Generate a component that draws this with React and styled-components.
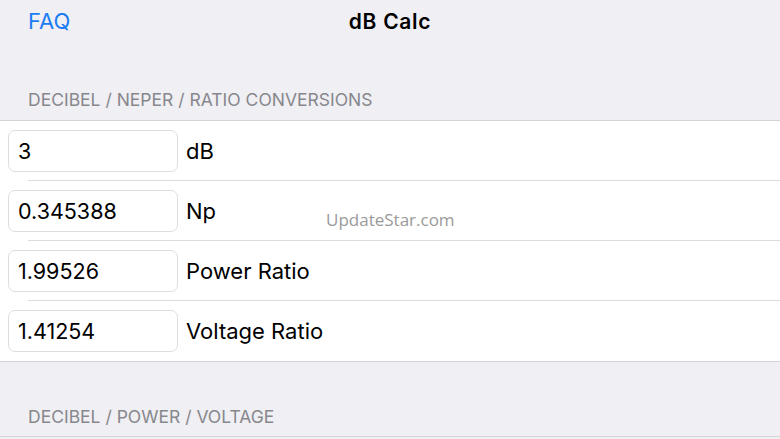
import React from 'react';
import styled, {createGlobalStyle} from 'styled-components';

const GlobalStyle = createGlobalStyle`
    html, body {
        margin: 0;
        padding: 0;
        background: #efeff4;
    }
    body {
        font-family: Inter, "Liberation Sans", sans-serif;
        -webkit-font-smoothing: antialiased;
    }
`

const Screen = styled.div`
    position: relative;
    width: 780px;
    height: 439px;
    overflow: hidden;
    background: #efeff4;
`

const NavBar = styled.div`
    position: relative;
    height: 44px;
    display: flex;
    align-items: center;
    padding: 0 28px;
    box-sizing: border-box;
    margin-top: -1px;
`

const NavButton = styled.span`
    font-size: 22px;
    color: #1b7cf4;
`

const NavTitle = styled.h1`
    position: absolute;
    left: 0;
    right: 0;
    margin: 0;
    text-align: center;
    font-size: 21px;
    font-weight: 600;
    color: #000;
    letter-spacing: 0.7px;
    pointer-events: none;
`

const SectionHeader = styled.div`
    padding: ${props => props.top}px 28px ${props => props.bottom}px;
    font-size: 17.5px;
    color: #87878c;
    line-height: 20px;
`

const Table = styled.ul`
    list-style: none;
    margin: 0;
    padding: 0;
    background: #fff;
    border-top: 1px solid #d4d4d8;
    border-bottom: 1px solid #d4d4d8;
`

const Row = styled.li`
    position: relative;
    height: 60px;
    display: flex;
    align-items: center;
    gap: 8px;
    padding-left: 8px;
    box-sizing: border-box;

    &:not(:last-child)::after {
        content: '';
        position: absolute;
        left: 28px;
        right: 0;
        bottom: 0;
        height: 1px;
        background: #dcdce0;
    }
`

const ValueBox = styled.div`
    width: 170px;
    height: 42px;
    margin-top: -1px;
    box-sizing: border-box;
    border: 1px solid #dedee2;
    border-radius: 7px;
    display: flex;
    align-items: center;
    padding-left: 9px;
    font-size: 21.5px;
    color: #000;
`

const Label = styled.span`
    font-size: 22px;
    color: #000;
    margin-top: -1px;
`

const Watermark = styled.div`
    position: absolute;
    left: 326px;
    top: 208px;
    font-family: "Open Sans", sans-serif;
    font-size: 17px;
    color: #9a9a9a;
`

const EmptyTable = styled.div`
    height: 0;
    border-top: 1px solid #d4d4d8;
    background: #fff;
`

const conversions = [
    {value: '3', unit: 'dB'},
    {value: '0.345388', unit: 'Np'},
    {value: '1.99526', unit: 'Power Ratio'},
    {value: '1.41254', unit: 'Voltage Ratio'},
]

export default function App() {
    return (
        <Screen>
            <GlobalStyle/>
            <NavBar>
                <NavButton>FAQ</NavButton>
                <NavTitle>dB Calc</NavTitle>
            </NavBar>

            <SectionHeader top={47} bottom={10}>DECIBEL / NEPER / RATIO CONVERSIONS</SectionHeader>
            <Table>
                {conversions.map((item, key) => (
                    <Row key={key}>
                        <ValueBox>{item.value}</ValueBox>
                        <Label>{item.unit}</Label>
                    </Row>
                ))}
            </Table>

            <SectionHeader top={45} bottom={9}>DECIBEL / POWER / VOLTAGE</SectionHeader>
            <EmptyTable/>

            <Watermark>UpdateStar.com</Watermark>
        </Screen>
    );
}
